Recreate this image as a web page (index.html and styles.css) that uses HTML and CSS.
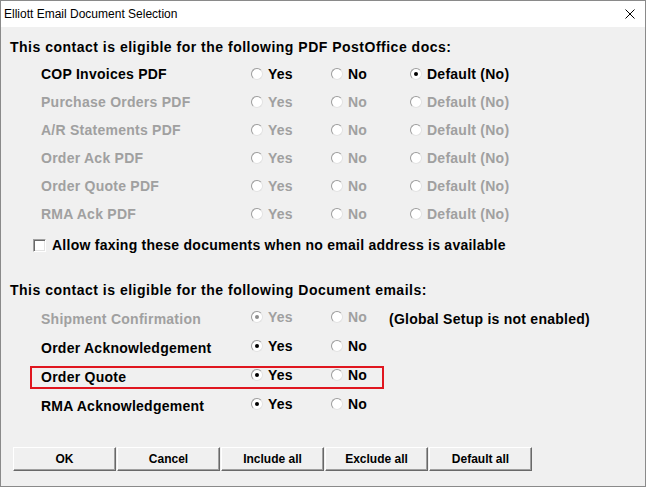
FILE: index.html
```html
<!DOCTYPE html>
<html>
<head>
<meta charset="utf-8">
<link rel="stylesheet" href="styles.css">
</head>
<body>
<div class="window">
  <div class="titlebar">
    <span class="title">Elliott Email Document Selection</span>
    <svg class="close" width="10" height="10" viewBox="0 0 10 10"><path d="M0.5 0.5L9.5 9.5M9.5 0.5L0.5 9.5" stroke="#000" stroke-width="1" fill="none"/></svg>
  </div>
  <div class="content">
    <div class="heading h1">This contact is eligible for the following PDF PostOffice docs:</div>
    <div class="pdf-rows">
      <div class="row">
        <span class="label">COP Invoices PDF</span>
        <span class="opts">
          <span class="opt"><span class="radio"></span><span>Yes</span></span>
          <span class="opt no"><span class="radio"></span><span>No</span></span>
          <span class="opt"><span class="radio on"></span><span>Default (No)</span></span>
        </span>
      </div>
      <div class="row dis">
        <span class="label">Purchase Orders PDF</span>
        <span class="opts">
          <span class="opt"><span class="radio"></span><span>Yes</span></span>
          <span class="opt no"><span class="radio"></span><span>No</span></span>
          <span class="opt"><span class="radio"></span><span>Default (No)</span></span>
        </span>
      </div>
      <div class="row dis">
        <span class="label">A/R Statements PDF</span>
        <span class="opts">
          <span class="opt"><span class="radio"></span><span>Yes</span></span>
          <span class="opt no"><span class="radio"></span><span>No</span></span>
          <span class="opt"><span class="radio"></span><span>Default (No)</span></span>
        </span>
      </div>
      <div class="row dis">
        <span class="label">Order Ack PDF</span>
        <span class="opts">
          <span class="opt"><span class="radio"></span><span>Yes</span></span>
          <span class="opt no"><span class="radio"></span><span>No</span></span>
          <span class="opt"><span class="radio"></span><span>Default (No)</span></span>
        </span>
      </div>
      <div class="row dis">
        <span class="label">Order Quote PDF</span>
        <span class="opts">
          <span class="opt"><span class="radio"></span><span>Yes</span></span>
          <span class="opt no"><span class="radio"></span><span>No</span></span>
          <span class="opt"><span class="radio"></span><span>Default (No)</span></span>
        </span>
      </div>
      <div class="row dis">
        <span class="label">RMA Ack PDF</span>
        <span class="opts">
          <span class="opt"><span class="radio"></span><span>Yes</span></span>
          <span class="opt no"><span class="radio"></span><span>No</span></span>
          <span class="opt"><span class="radio"></span><span>Default (No)</span></span>
        </span>
      </div>
    </div>
    <div class="check-row">
      <span class="checkbox"></span>
      <span>Allow faxing these documents when no email address is available</span>
    </div>
    <div class="heading h2">This contact is eligible for the following Document emails:</div>
    <div class="email-rows">
      <div class="row erow">
        <span class="label dis-text">Shipment Confirmation</span>
        <span class="opts">
          <span class="opt dis-text"><span class="radio on dis-radio"></span><span>Yes</span></span>
          <span class="opt short dis-text"><span class="radio"></span><span>No</span></span>
          <span class="note">(Global Setup is not enabled)</span>
        </span>
      </div>
      <div class="row erow">
        <span class="label">Order Acknowledgement</span>
        <span class="opts">
          <span class="opt"><span class="radio on"></span><span>Yes</span></span>
          <span class="opt no"><span class="radio"></span><span>No</span></span>
        </span>
      </div>
      <div class="row erow marked">
        <span class="label">Order Quote</span>
        <span class="opts">
          <span class="opt"><span class="radio on"></span><span>Yes</span></span>
          <span class="opt no"><span class="radio"></span><span>No</span></span>
        </span>
      </div>
      <div class="row erow">
        <span class="label">RMA Acknowledgement</span>
        <span class="opts">
          <span class="opt"><span class="radio on"></span><span>Yes</span></span>
          <span class="opt no"><span class="radio"></span><span>No</span></span>
        </span>
      </div>
    </div>
    <div class="buttons">
      <button class="btn">OK</button>
      <button class="btn">Cancel</button>
      <button class="btn">Include all</button>
      <button class="btn">Exclude all</button>
      <button class="btn">Default all</button>
    </div>
  </div>
</div>
</body>
</html>
```

FILE: styles.css
```css
html, body {
  margin: 0;
  padding: 0;
}
body {
  width: 646px;
  height: 487px;
  overflow: hidden;
  background: #f0f0f0;
}
.window {
  box-sizing: border-box;
  width: 646px;
  height: 487px;
  border: 1px solid #8a8a8a;
  background: #f0f0f0;
  display: flex;
  flex-direction: column;
  font-family: "Liberation Sans", Arial, sans-serif;
  color: #000;
}
.titlebar {
  height: 26px;
  flex: none;
  background: #fff;
  display: flex;
  align-items: center;
  justify-content: space-between;
  padding-left: 3px;
  padding-right: 10px;
}
.title {
  font-size: 12px;
  line-height: 16px;
  margin-top: -1px;
}
.close {
  display: block;
}
.content {
  padding: 0 9px;
  font-size: 14px;
  font-weight: bold;
  letter-spacing: 0.25px;
  display: flex;
  flex-direction: column;
}
.heading {
  line-height: 16px;
  height: 16px;
  letter-spacing: 0.5px;
  white-space: nowrap;
}
.h1 {
  margin-top: 12px;
}
.pdf-rows {
  margin-top: 5px;
  display: flex;
  flex-direction: column;
}
.row {
  position: relative;
  display: flex;
  align-items: center;
  height: 28px;
  padding-left: 31px;
  white-space: nowrap;
}
.erow {
  height: 29px;
}
.label {
  width: 210px;
  flex: none;
  line-height: 16px;
}
.opts {
  display: flex;
  align-items: center;
}
.erow .opts {
  margin-bottom: 4px;
}
.opt {
  display: flex;
  align-items: center;
  gap: 5px;
  width: 80px;
  flex: none;
  line-height: 16px;
}
.opt.no {
  width: 79px;
}
.opt.short {
  width: 58px;
}
.note {
  line-height: 16px;
  margin-top: 4px;
}
.dis .label,
.dis .opt,
.dis-text {
  color: #a0a0a0;
}
.radio {
  box-sizing: border-box;
  width: 12px;
  height: 12px;
  flex: none;
  border-radius: 50%;
  border: 1px solid;
  border-color: #9c9c9c #e2e2e2 #e2e2e2 #9c9c9c;
  background: #fff;
  display: flex;
  align-items: center;
  justify-content: center;
}
.radio.on::after {
  content: "";
  width: 4px;
  height: 4px;
  border-radius: 50%;
  background: #000;
}
.radio.dis-radio::after {
  background: #8c8c8c;
}
.check-row {
  display: flex;
  align-items: center;
  gap: 6px;
  height: 20px;
  margin-top: 7px;
  padding-left: 23px;
  line-height: 16px;
  white-space: nowrap;
}
.checkbox {
  box-sizing: border-box;
  width: 13px;
  height: 13px;
  flex: none;
  border: 1px solid;
  border-color: #a0a0a0 #fff #fff #a0a0a0;
  box-shadow: inset 1px 1px #696969, inset -1px -1px #e3e3e3;
  background: #fff;
}
.h2 {
  margin-top: 27px;
}
.email-rows {
  margin-top: 6px;
  display: flex;
  flex-direction: column;
}
.marked::after {
  content: "";
  position: absolute;
  left: 20px;
  top: 4px;
  width: 354px;
  height: 23px;
  box-sizing: border-box;
  border: 2px solid #e0161f;
}
.buttons {
  display: flex;
  gap: 1px;
  margin-top: 27px;
  padding-left: 3px;
}
.btn {
  box-sizing: border-box;
  width: 103px;
  height: 24px;
  margin: 0;
  padding: 0;
  background: #f0f0f0;
  border: 1px solid;
  border-color: #fff #696969 #696969 #fff;
  box-shadow: inset -1px -1px #a0a0a0;
  font-family: "Liberation Sans", Arial, sans-serif;
  font-size: 12px;
  font-weight: bold;
  color: #000;
  letter-spacing: 0;
}
```
